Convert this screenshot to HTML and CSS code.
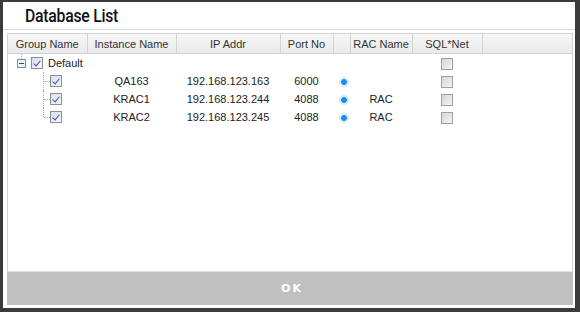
FILE: index.html
```html
<!DOCTYPE html>
<html lang="en">
	<head>
		<meta charset="UTF-8" />
		<title>Database List</title>
		<link rel="stylesheet" href="styles.css">
	</head>
	<body>
		<div id="dialog">
			<div class="title"><span>Database List</span></div>
			<div class="body">
				<div class="grid">
					<table>
						<colgroup>
							<col style="width: 79px" />
							<col style="width: 89px" />
							<col style="width: 104px" />
							<col style="width: 53px" />
							<col style="width: 17px" />
							<col style="width: 62px" />
							<col style="width: 70px" />
							<col />
						</colgroup>
						<thead>
							<tr>
								<th>Group Name</th>
								<th>Instance Name</th>
								<th>IP Addr</th>
								<th>Port No</th>
								<th></th>
								<th>RAC Name</th>
								<th>SQL*Net</th>
								<th class="filler"></th>
							</tr>
						</thead>
						<tbody>
							<tr>
								<td>
									<div class="tree root">
										<span class="toggle"></span>
										<span class="check on"></span>
										<span class="label">Default</span>
									</div>
								</td>
								<td></td>
								<td></td>
								<td></td>
								<td></td>
								<td></td>
								<td><span class="check"></span></td>
								<td></td>
							</tr>
							<tr>
								<td><div class="tree child"><span class="branch"></span><span class="check on"></span></div></td>
								<td>QA163</td>
								<td>192.168.123.163</td>
								<td>6000</td>
								<td><span class="radio"></span></td>
								<td></td>
								<td><span class="check"></span></td>
								<td></td>
							</tr>
							<tr>
								<td><div class="tree child"><span class="branch"></span><span class="check on"></span></div></td>
								<td>KRAC1</td>
								<td>192.168.123.244</td>
								<td>4088</td>
								<td><span class="radio"></span></td>
								<td>RAC</td>
								<td><span class="check"></span></td>
								<td></td>
							</tr>
							<tr>
								<td><div class="tree child"><span class="branch last"></span><span class="check on"></span></div></td>
								<td>KRAC2</td>
								<td>192.168.123.245</td>
								<td>4088</td>
								<td><span class="radio"></span></td>
								<td>RAC</td>
								<td><span class="check"></span></td>
								<td></td>
							</tr>
						</tbody>
					</table>
				</div>
				<div class="ok">OK</div>
			</div>
		</div>
	</body>
</html>
```

FILE: styles.css
```css
html,
body {
	margin: 0;
	height: 100%;
	background: #3b3b3b;
}

body {
	padding: 2px 5px 4px 3px;
	box-sizing: border-box;
	font-family: "Liberation Sans", Arial, sans-serif;
	font-size: 11px;
	color: #222;
}

#dialog {
	height: 100%;
	background: #fff;
	display: flex;
	flex-direction: column;
}

.title {
	height: 27px;
	padding-left: 22px;
	font-family: Roboto, "Liberation Sans", sans-serif;
	font-weight: 500;
	font-size: 19px;
	line-height: 28px;
	color: #111;
	border-bottom: 1px solid #d8d8d8;
}

.title span {
	display: inline-block;
	letter-spacing: -0.3px;
	transform: scaleX(0.83);
	transform-origin: left center;
}

.body {
	flex: 1;
	display: flex;
	flex-direction: column;
	padding: 3px 2px 3px 4px;
}

.grid {
	flex: 1;
	border: 1px solid #d4d4d4;
	border-bottom-color: #e2e2e2;
}

table {
	width: 100%;
	border-collapse: collapse;
	table-layout: fixed;
}

th {
	height: 19px;
	padding: 0;
	font-weight: normal;
	color: #333;
	background: linear-gradient(#f6f6f6, #e9eaec);
	border-right: 1px solid #d2d2d2;
	border-bottom: 1px solid #d2d2d2;
	text-align: center;
}

th.filler {
	border-right: none;
}

td {
	height: 18px;
	padding: 0;
	text-align: center;
	vertical-align: middle;
	white-space: nowrap;
}

.tree {
	display: flex;
	align-items: center;
	height: 18px;
}

.tree.root {
	padding-left: 9px;
}

.tree.child {
	padding-left: 35px;
}

.toggle {
	position: relative;
	width: 7px;
	height: 7px;
	margin-right: 5px;
	border: 1px solid #6f8fa8;
	background: #eef3f7;
}

.toggle::after {
	content: "";
	position: absolute;
	left: 1px;
	right: 1px;
	top: 3px;
	height: 1px;
	background: #304a70;
}

.toggle::before {
	content: "";
	position: absolute;
	left: 3px;
	top: -6px;
	height: 5px;
	border-left: 1px dotted #b0b0b0;
}

.label {
	margin-left: 5px;
	color: #222;
}

.branch {
	align-self: stretch;
	width: 6px;
	border-left: 1px dotted #aaa;
	position: relative;
}

.branch::after {
	content: "";
	position: absolute;
	left: 0;
	top: 9px;
	width: 6px;
	border-top: 1px dotted #aaa;
}

.branch.last {
	align-self: flex-start;
	height: 9px;
}

.check {
	display: inline-block;
	vertical-align: middle;
	width: 10px;
	height: 10px;
	border: 1px solid #a0a0a0;
	background: linear-gradient(135deg, #d6d6d6, #f4f4f4);
	position: relative;
}

.check.on {
	background: linear-gradient(135deg, #d9dde6, #f6f7fa);
	border-color: #8f8f8f;
}

.check.on::after {
	content: "";
	position: absolute;
	left: 3px;
	top: 1px;
	width: 3px;
	height: 6px;
	border-right: 1.5px solid #3356b8;
	border-bottom: 1.5px solid #3356b8;
	transform: rotate(40deg);
}

.radio {
	display: inline-block;
	vertical-align: middle;
	box-sizing: border-box;
	width: 10px;
	height: 10px;
	border-radius: 50%;
	border: 1px solid #c4e4ee;
	background: radial-gradient(circle, #1b8cf5 0, #1b8cf5 2.6px, #e4f3f8 3.2px);
	margin-left: 4px;
}

.ok {
	height: 33px;
	background: #c0c0c0;
	color: #fff;
	font-family: "DejaVu Sans", sans-serif;
	font-weight: bold;
	font-size: 11px;
	letter-spacing: 2px;
	line-height: 34px;
	text-align: center;
	text-indent: 4px;
}
```
